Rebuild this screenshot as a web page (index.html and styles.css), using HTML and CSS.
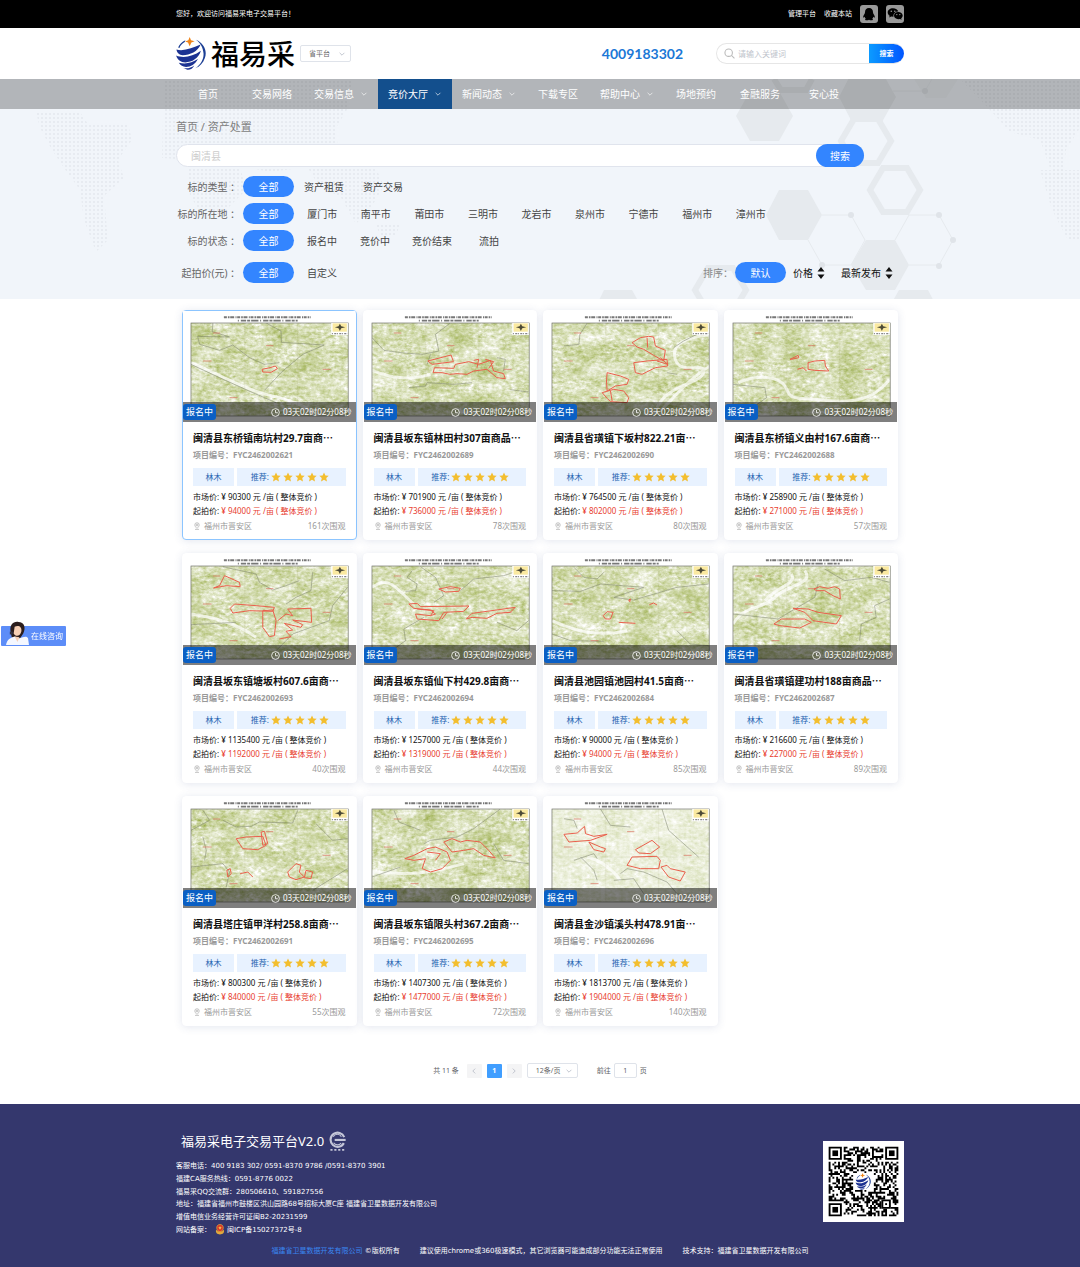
FILE: index.html
```html
<!DOCTYPE html>
<html lang="zh-CN">
<head>
<meta charset="utf-8">
<meta name="viewport" content="width=device-width, initial-scale=1">
<title>福易采电子交易平台</title>
<link rel="stylesheet" href="styles.css">
</head>
<body>
<svg class="defs" aria-hidden="true">
  <defs>
    <symbol id="logo" viewBox="0 0 93 100">
      <path d="M60 8C84 18 95 42 87 64C82 79 72 90 58 95C75 84 84 67 83 50C82 32 74 18 60 8Z" fill="#1c3f94"/>
      <path d="M1 38C22 44 50 34 74 23C66 44 42 55 20 55C10 55 2 48 1 38Z" fill="#1c3292"/>
      <path d="M0 56C20 65 50 60 75 42C68 65 48 77 28 77C14 77 3 68 0 56Z" fill="#1c3292"/>
      <path d="M8 78C28 83 48 79 66 67C58 83 44 91 30 91C20 90 13 86 8 78Z" fill="#1c3292"/>
      <path d="M22 94C36 96 45 93 55 86C51 95 42 100 34 99Z" fill="#1c3292"/>
      <path d="M6 32C10 22 18 14 28 10L26 15C18 20 12 26 10 33Z" fill="#1c3f94"/>
      <path d="M41 0L45 10L56 13L46 17L41 28L36 17L27 14L37 10Z" fill="#f08519"/>
    </symbol>
    <symbol id="chevron" viewBox="0 0 10 10"><path d="M2 3.5L5 6.5L8 3.5" fill="none" stroke="currentColor" stroke-width="1"/></symbol>
    <symbol id="star" viewBox="0 0 20 20"><path d="M10 1L12.8 7L19.4 7.7L14.5 12.2L15.9 18.8L10 15.4L4.1 18.8L5.5 12.2L.6 7.7L7.2 7Z" fill="#f3be2e"/></symbol>
    <symbol id="clock" viewBox="0 0 20 20"><g fill="none" stroke="#fff" stroke-width="1.8"><circle cx="10" cy="10" r="8.6"/><path d="M10 4.5V10.5H15"/></g></symbol>
    <symbol id="pin" viewBox="0 0 20 20"><g fill="none" stroke="#999" stroke-width="1.4"><path d="M10 16C6.500 12.500 4.500 10 4.500 7.300A5.500 5.500 0 0 1 15.500 7.300C15.500 10 13.500 12.500 10 16Z"/><circle cx="10" cy="7.500" r="2.300"/><path d="M5 18.500H15"/></g></symbol>
    <symbol id="sort" viewBox="0 0 8 14"><path d="M4 1L7.500 5.500H.5ZM4 13L7.500 8.500H.5Z" fill="#111"/></symbol>
    <pattern id="dots" width="4" height="4" patternUnits="userSpaceOnUse"><rect x="1" y="1" width="2" height="2" rx="1" fill="#e4e8ee"/></pattern>
  </defs>
</svg>

<div class="topbar">
  <div class="container topbar-row">
    <span>您好，欢迎访问福易采电子交易平台！</span>
    <div class="topbar-links">
      <a href="#">管理平台</a>
      <a href="#">收藏本站</a>
      <a class="social" href="#" aria-label="QQ">
        <svg viewBox="0 0 18 18"><rect width="18" height="18" rx="3" fill="#999"/><path d="M9 3C6.300 3 5 4.900 5 7.200C5 8 4.800 8.400 4.300 9.200C3.400 10.700 2.900 12 3.300 12.600C3.600 12.900 4.200 12.300 4.600 11.800C4.800 12.700 5.200 13.300 5.800 13.800C5.200 14 4.900 14.400 5.100 14.800C5.600 15.600 8.100 15.400 9 14.800C9.900 15.400 12.400 15.600 12.900 14.800C13.100 14.400 12.800 14 12.200 13.800C12.800 13.300 13.200 12.700 13.400 11.800C13.800 12.300 14.400 12.900 14.700 12.600C15.100 12 14.600 10.700 13.700 9.200C13.200 8.400 13 8 13 7.200C13 4.900 11.700 3 9 3Z" fill="#000"/></svg>
      </a>
      <a class="social" href="#" aria-label="微信">
        <svg viewBox="0 0 18 18"><rect width="18" height="18" rx="3" fill="#999"/><path d="M7 3.300C4 3.300 1.700 5.100 1.700 7.500C1.700 8.900 2.500 10 3.700 10.800L3.200 12.500L5.200 11.500L7.500 11.800C7 8.500 9.600 6.500 12.300 6.500C11.800 4.600 9.700 3.300 7 3.300Z" fill="#000"/><path d="M12.200 7C9.700 7 8 8.700 8 10.600C8 12.600 9.800 14.200 12.200 14.200L14 13.900L15.600 14.800L15.200 13.300C16.100 12.600 16.700 11.700 16.700 10.600C16.700 8.700 14.700 7 12.200 7Z" fill="#000"/><g fill="#999"><circle cx="5.300" cy="6.300" r=".8"/><circle cx="8.800" cy="6.300" r=".8"/><circle cx="10.800" cy="9.600" r=".7"/><circle cx="13.800" cy="9.600" r=".7"/></g></svg>
      </a>
    </div>
  </div>
</div>

<header class="container header">
  <a class="brand" href="#"><svg><use href="#logo"/></svg><span>福易采</span></a>
  <div class="select platform">
    <select aria-label="平台"><option>省平台</option></select>
    <svg><use href="#chevron"/></svg>
  </div>
  <strong class="phone">4009183302</strong>
  <form class="site-search">
    <svg viewBox="0 0 20 20"><g fill="none" stroke="#bbb" stroke-width="2"><circle cx="8.500" cy="8.500" r="6.800"/><path d="M13.500 13.500L19 19"/></g></svg>
    <input type="search" aria-label="关键词" placeholder="请输入关键词">
    <button type="button">搜索</button>
  </form>
</header>

<div class="hero">
  <svg class="hero-art" viewBox="0 79 1080 220" preserveAspectRatio="xMidYMin slice" aria-hidden="true">
    <g fill="url(#dots)">
      <path d="M36 112H80L88 124H128L132 140L118 160L124 178L104 196L108 240L96 252L84 220L80 190L64 168L52 150L40 128Z"/>
      <path d="M164 79H352L348 108L336 128L338 150L300 168L270 172L240 166L246 190L226 210L206 220L190 196L188 160L162 158Z"/>
      <path d="M308 168H376L384 186L372 206L356 224L340 196L320 188Z"/>
      <path d="M376 224H400L396 236H380Z"/>
      <path d="M960 79H1080V128L1066 150L1062 186L1050 168L1040 140L1010 132L990 110Z"/>
      <path d="M1040 170H1080V240H1068L1052 210Z"/>
    </g>
    <g fill="#e6eaee">
      <path d="M736 116L750 91H779L793 116L779 141H750Z"/>
      <path d="M839 97L852 72H882L896 97L882 122H852Z"/>
      <path d="M766 215L779 190H808L822 215L808 240H779Z"/>
      <path d="M851 265L866 240H895L909 265L895 290H866Z"/>
      <path d="M592 315L604 290H632L646 315Z"/>
      <path d="M885 315L899 290H928L941 315Z"/>
      <path d="M914 79H958L946 98H926Z" opacity=".4"/>
    </g>
    <g fill="none" stroke="#e6eaee" stroke-width="6">
      <path d="M841 141L854 119H878L891 141L878 163H854Z"/>
      <path d="M870 190L883 168H907L920 190L907 212H883Z"/>
      <path d="M695 290L708 268H733L746 290L733 312H708Z"/>
      <path d="M774 79L781 90H806L812 79"/>
    </g>
    <g fill="none" stroke="#e6eaee">
      <path d="M822 215H851L865 240L851 265H822L808 240"/>
      <path d="M895 240L909 215H939L953 240L939 265H909"/>
      <path d="M893 91H925L932 79"/>
    </g>
    <g fill="#e0e4e9"><circle cx="851" cy="215" r="3"/><circle cx="822" cy="265" r="3"/><circle cx="939" cy="215" r="3"/><circle cx="953" cy="240" r="3"/><circle cx="939" cy="266" r="3"/><circle cx="925" cy="91" r="3"/></g>
  </svg>
  <nav class="nav">
    <div class="container nav-row">
      <a href="#">首页</a>
      <a href="#">交易网络</a>
      <a class="has-menu" href="#">交易信息<svg><use href="#chevron"/></svg></a>
      <a class="has-menu active" href="#">竞价大厅<svg><use href="#chevron"/></svg></a>
      <a class="has-menu" href="#">新闻动态<svg><use href="#chevron"/></svg></a>
      <a href="#">下载专区</a>
      <a class="has-menu" href="#">帮助中心<svg><use href="#chevron"/></svg></a>
      <a href="#">场地预约</a>
      <a href="#">金融服务</a>
      <a href="#">安心投</a>
    </div>
  </nav>
  <div class="container hero-body">
    <p class="crumbs"><a href="#">首页</a> / <a href="#">资产处置</a></p>
    <form class="asset-search">
      <input type="text" aria-label="标的名称" placeholder="闽清县">
      <button type="button">搜索</button>
    </form>
    <div class="filters">
      <div class="filter">
        <span class="filter-label">标的类型 ：</span>
        <div class="options snug"><button class="on">全部</button><button>资产租赁</button><button>资产交易</button></div>
      </div>
      <div class="filter">
        <span class="filter-label">标的所在地 ：</span>
        <div class="options even"><button class="on">全部</button><button>厦门市</button><button>南平市</button><button>莆田市</button><button>三明市</button><button>龙岩市</button><button>泉州市</button><button>宁德市</button><button>福州市</button><button>漳州市</button></div>
      </div>
      <div class="filter">
        <span class="filter-label">标的状态 ：</span>
        <div class="options"><button class="on">全部</button><button>报名中</button><button>竞价中</button><button>竞价结束</button><button>流拍</button></div>
      </div>
      <div class="filter filter-last">
        <span class="filter-label">起拍价(元) ：</span>
        <div class="options"><button class="on">全部</button><button>自定义</button></div>
        <div class="sort">
          <span>排序：</span>
          <button class="on">默认</button>
          <button class="sort-key">价格<svg><use href="#sort"/></svg></button>
          <button class="sort-key">最新发布<svg><use href="#sort"/></svg></button>
        </div>
      </div>
    </div>
  </div>
</div>

<main class="container">
  <div class="cards" id="cards"></div>
  <div class="pager">
    <span class="pager-total">共 11 条</span>
    <button class="page" disabled aria-label="上一页"><svg viewBox="0 0 10 10"><path d="M6.500 2L3.500 5L6.500 8"/></svg></button>
    <button class="page current">1</button>
    <button class="page" disabled aria-label="下一页"><svg viewBox="0 0 10 10"><path d="M3.500 2L6.500 5L3.500 8"/></svg></button>
    <div class="select page-size">
      <select aria-label="每页条数"><option>12条/页</option></select>
      <svg><use href="#chevron"/></svg>
    </div>
    <label class="jump">前往 <input type="text" value="1"> 页</label>
  </div>
</main>

<footer class="footer">
  <div class="container">
    <div class="footer-main">
      <div>
        <h2 class="footer-title">福易采电子交易平台V2.0
          <svg viewBox="0 0 48 56"><g fill="none" stroke="#c4c6d8"><path d="M43 17A20 20 0 1 0 42 34" stroke-width="6"/><path d="M16 25H47" stroke-width="6"/><path d="M12 16A13 13 0 0 1 35 16M13 33A13 13 0 0 0 34 34" stroke-width="3"/><path d="M4 53H44" stroke-width="5" stroke-dasharray="6 5"/></g></svg>
        </h2>
        <ul class="contact">
          <li>客服电话：400 9183 302/ 0591-8370 9786 /0591-8370 3901</li>
          <li>福建CA服务热线：0591-8776 0022</li>
          <li>福易采QQ交流群：280506610、591827556</li>
          <li>地址：福建省福州市鼓楼区洪山园路68号招标大厦C座 福建省卫星数据开发有限公司</li>
          <li>增值电信业务经营许可证闽B2-20231599</li>
          <li class="record">网站备案：
            <svg viewBox="0 0 28 30"><path d="M3 16C1 24 6 29 14 29S27 24 25 16L20 20H8Z" fill="#e2a93b"/><path d="M14 1C20 1 24 5 23 12C22 18 18 21 14 21S6 18 5 12C4 5 8 1 14 1Z" fill="#d8352a" stroke="#e2a93b" stroke-width="2"/><path d="M14 5L15.500 9H19L16 11.500L17 15L14 13L11 15L12 11.500L9 9H12.500Z" fill="#f7c948"/></svg>
            闽ICP备15027372号-8</li>
        </ul>
      </div>
      <svg class="qr" id="qr" viewBox="-3 -3 43 43" role="img" aria-label="二维码"></svg>
    </div>
    <div class="legal">
      <span><a href="#">福建省卫星数据开发有限公司</a> ©版权所有</span>
      <span>建议使用chrome或360极速模式，其它浏览器可能造成部分功能无法正常使用</span>
      <span>技术支持：福建省卫星数据开发有限公司</span>
    </div>
  </div>
</footer>

<a class="chat" href="#">
  <svg viewBox="0 0 24 26"><path d="M5 12C3 4 8 0 13 1C19 1 21 7 18 13L14 19L6 17Z" fill="#2b1d1c"/><path d="M9 6C13 4 17 6 16 11C15 16 10 17 8 13Z" fill="#f6cfb4"/><path d="M0 25C1 19 5 17 9 16L14 18C18 17 21 15 23 18L24 25Z" fill="#f4f7ff"/><path d="M9 16L12 22L14 17Z" fill="#f6cfb4"/><path d="M4 11H7V14H4Z" fill="#334"/></svg>
  在线咨询
</a>
<script src="script.js"></script>
</body>
</html>
```
FILE: styles.css
```css
* { box-sizing: border-box; }
body {
  margin: 0;
  background: #fff;
  color: #222;
  font: 8px/14px "Noto Sans", "Noto Sans CJK SC", sans-serif;
}
a { color: inherit; text-decoration: none; }
button, input, select { font: inherit; color: inherit; margin: 0; padding: 0; border: 0; background: none; outline: 0; }
button { cursor: pointer; white-space: nowrap; }
ul, h2, h3, p { margin: 0; padding: 0; list-style: none; }
svg { display: block; flex: none; }
.defs { position: absolute; width: 0; height: 0; }
.container { width: 100%; max-width: 728px; margin: 0 auto; }

.topbar { background: #000; color: #fff; font-size: 7px; }
.topbar-row { display: flex; align-items: center; justify-content: space-between; height: 28px; }
.topbar-links { display: flex; align-items: center; gap: 8px; }
.social svg { width: 18px; height: 18px; }

.header { display: flex; align-items: center; height: 51px; }
.brand { display: flex; align-items: center; gap: 4px; color: #000; font-size: 28px; font-weight: 500; line-height: 40px; }
.brand svg { width: 31px; height: 33px; }
.select { position: relative; border: 1px solid #dfe3ea; border-radius: 2px; color: #666; font-size: 7px; }
.select select { width: 100%; height: 100%; padding-left: 8px; appearance: none; }
.select svg { position: absolute; top: 50%; right: 4px; width: 8px; height: 8px; margin-top: -4px; color: #b4b9c4; pointer-events: none; }
.platform { width: 51px; height: 17px; margin-left: 5px; }
.phone { margin-left: auto; margin-right: 33px; color: #1b78d6; font: bold 14px/20px Lato, sans-serif; }
.site-search { display: flex; align-items: center; width: 188px; height: 21px; padding-left: 7px; border: 1px solid #e6e6e6; border-right: 0; border-radius: 11px; overflow: hidden; }
.site-search svg { width: 11px; height: 11px; }
.site-search input { flex: 1; min-width: 0; padding-left: 3px; }
.site-search button { width: 35px; height: 21px; background: linear-gradient(90deg, #0c9bff, #0055ff); color: #fff; font-size: 7px; font-weight: bold; }
::placeholder { color: #c0c4cc; opacity: 1; }

.hero { position: relative; background: #f1f5fa; }
.hero-art { position: absolute; inset: 0; width: 100%; height: 100%; }
.nav { position: relative; background: rgba(0, 0, 0, .26); color: #fff; font-size: 10px; }
.nav-row { display: flex; }
.nav a { display: flex; align-items: center; justify-content: center; width: 64px; height: 30px; white-space: nowrap; }
.nav a.has-menu { width: 74px; gap: 6px; }
.nav a svg { width: 8px; height: 8px; opacity: .8; }
.nav a.active { background: #134f8d; }
.hero-body { position: relative; padding: 9px 0 16px; }
.crumbs { color: #808080; font-size: 11px; line-height: 18px; }
.asset-search { display: flex; max-width: 688px; height: 23px; margin-top: 8px; border-radius: 12px; background: #fff; border: 1px solid #e0e4ed; font-size: 10px; }
.asset-search input { flex: 1; padding-left: 14px; }
.asset-search ::placeholder { color: #ccc; }
.asset-search button { width: 48px; height: 23px; margin: -1px; border-radius: 12px; background: #3385ff; color: #fff; }
.filters { display: flex; flex-direction: column; gap: 6px; margin-top: 9px; font-size: 10px; }
.filter { display: flex; align-items: center; height: 21px; color: #444; }
.filter-last { margin-top: 5px; }
.filter-label { width: 67px; padding-right: 3px; text-align: right; color: #666; white-space: nowrap; }
.options { display: flex; gap: 3px; }
.options.snug { gap: 1px; }
.options.even { display: grid; grid-template-columns: repeat(10, 1fr); width: 533px; }
.options button { min-width: 50px; height: 21px; padding: 0 9px; }
.filter .on { width: 51px; height: 21px; padding: 0; border-radius: 11px; background: #3385ff; color: #fff; }
.sort { display: flex; align-items: center; margin-left: auto; padding-right: 11px; color: #888; }
.sort span { margin-right: 2px; }
.sort-key { display: flex; align-items: center; gap: 4px; color: #111; margin-left: 7px; }
.sort-key + .sort-key { margin-left: 16px; }
.sort-key svg { width: 8px; height: 14px; }

.cards { display: grid; grid-template-columns: repeat(4, 1fr); gap: 13px 6px; padding: 11px 6px 0; }
.card { border: 1px solid #fff; border-radius: 4px; background: #fff; box-shadow: 0 1px 8px rgba(60, 80, 140, .14); }
.card.picked { border-color: #8cc5ff; }
.thumb { position: relative; height: 111px; }
.thumb .map { width: 100%; height: 100%; }
.status { position: absolute; inset: auto 0 0; display: flex; align-items: center; justify-content: space-between; height: 20px; padding-right: 4px; background: rgba(0, 0, 0, .5); color: #fff; }
.badge { height: 16px; padding: 0 3px; border-radius: 3px; background: #0a5fc4; font-size: 9px; line-height: 16px; }
.timer { display: flex; align-items: center; gap: 3px; white-space: nowrap; }
.timer svg { width: 9px; height: 9px; }
.card-body { padding: 8px 10px 6px; }
.card h3 { color: #111; font-size: 10px; line-height: 16px; white-space: nowrap; }
.code { margin-top: 3px; color: #999; font-weight: bold; line-height: 12px; }
.tags { display: flex; gap: 3px; margin: 7px 0 4px; color: #2463b0; }
.tags > span { display: flex; align-items: center; justify-content: center; height: 18px; background: #e8f2ff; }
.kind { width: 41px; }
.rating { flex: 1; gap: 2px; padding-right: 3px; }
.rating svg { width: 10px; height: 10px; }
.price { white-space: nowrap; color: #111; }
.price em { font-style: normal; color: #e8402f; }
.place { display: flex; align-items: center; gap: 3px; margin-top: 1px; color: #999; }
.place svg { width: 8px; height: 8px; }
.place span { margin-left: auto; }

.pager { display: flex; align-items: center; justify-content: center; gap: 5px; height: 15px; margin: 37px 0 26px; color: #606266; font-size: 7px; }
.pager-total { margin-right: 3px; }
.page { display: flex; align-items: center; justify-content: center; width: 15px; height: 14px; border-radius: 1px; background: #f4f4f5; color: #b4b9c4; }
.page svg { width: 8px; height: 8px; fill: none; stroke: currentColor; }
.page.current { background: #409eff; color: #fff; font-weight: bold; }
.page-size { width: 51px; height: 15px; }
.jump { display: flex; align-items: center; gap: 3px; margin-left: 14px; }
.jump input { width: 23px; height: 15px; border: 1px solid #dfe3ea; border-radius: 2px; text-align: center; }

.footer { padding: 26px 0 9px; background: #34376d; color: #fff; font-size: 7px; }
.footer-main { display: flex; justify-content: space-between; }
.footer-title { display: flex; align-items: center; gap: 5px; padding-left: 5px; font-size: 13px; font-weight: normal; line-height: 22px; }
.footer-title svg { width: 17px; height: 20px; }
.contact, .legal { font-family: "DejaVu Sans", "Noto Sans CJK SC", sans-serif; }
.contact { display: grid; align-content: space-between; height: 76px; margin-top: 8px; line-height: 12px; }
.record { display: flex; align-items: center; gap: 2px; }
.record svg { width: 10px; height: 11px; margin-left: 2px; }
.qr { width: 81px; height: 81px; margin-top: 11px; }
.legal { display: flex; justify-content: center; gap: 20px; margin-top: 8px; line-height: 14px; white-space: nowrap; }
.legal a { color: #3a86f0; }

.chat { position: fixed; left: 1px; top: 626px; display: flex; align-items: flex-end; gap: 2px; height: 20px; padding: 0 3px 0 5px; border-radius: 1px; background: #5c8df8; color: #fff; line-height: 20px; }
.chat svg { width: 23px; height: 25px; }
```
FILE: script.js
```js
// Plot maps use a drawing space three times the thumbnail's pixel size.
const lots = [
  {
    title: "闽清县东桥镇南坑村29.7亩商⋯", code: "2621", market: 90300, start: 94000, views: 161, picked: true,
    roads: "M24 155C110 190 170 230 250 250S390 285 400 333",
    bounds: "M90 36L88 62L140 78L44 76L50 100L110 118L150 102L200 140L245 160L290 155M250 36L295 60L296 94L425 102L360 130L300 180L245 238M24 160L110 200L210 245L280 275",
    plots: "M238 175L262 170L278 165L284 173L265 184L240 183Z"
  },
  {
    title: "闽清县坂东镇林田村307亩商品⋯", code: "2689", market: 701900, start: 736000, views: 78,
    roads: "M24 178C80 200 130 210 200 190",
    bounds: "M24 80L60 118L120 126L175 130L225 120L215 70L260 36M190 160L200 130M135 230L185 225L190 215L270 220L325 215M400 140L425 145L420 180M440 236L495 243",
    plots: "M192 150L262 132L269 152L205 160ZM208 185L212 170L270 172L275 160L315 152L345 160L380 148L390 180L420 188L425 203L400 200L370 175L330 180L310 190L280 188L258 190L235 185ZM330 148L345 145L340 170M365 145L390 152L375 172"
  },
  {
    title: "闽清县省璜镇下坂村822.21亩⋯", code: "2690", market: 764500, start: 802000, views: 80,
    roads: "M500 70C430 80 380 95 395 145S490 150 480 185S370 220 340 290M500 165C440 200 410 240 350 300",
    bounds: "M130 36L108 70L105 100L60 105M500 50L420 90L390 110M370 185L400 190",
    plots: "M265 95L290 80L315 76L330 78L335 105L365 118L360 150L330 133L300 115L280 108ZM270 155L310 150L370 145L372 165L335 170L295 190L275 185ZM190 185L230 195L255 205L250 220L215 225L190 240L188 210ZM175 245L210 235L240 240L255 260L250 275L200 272L190 262ZM200 240L205 270M310 80L312 110M350 140L372 160L340 150"
  },
  {
    title: "闽清县东桥镇义由村167.6亩商⋯", code: "2688", market: 258900, start: 271000, views: 57,
    roads: "M40 215C100 190 160 195 180 225S180 260 260 265S430 290 495 205",
    bounds: "M24 220L120 230L125 260L90 285M470 40L495 60",
    plots: "M196 145L220 133L222 140L200 145ZM250 155L270 150L300 148L302 165L312 180L270 178L250 175ZM218 175L235 170L245 180"
  },
  {
    title: "闽清县坂东镇塘坂村607.6亩商⋯", code: "2693", market: 1135400, start: 1192000, views: 40,
    roads: "M24 180C80 190 150 200 220 250",
    bounds: "M120 38L220 60L230 85L270 108L310 95L350 80M390 55L385 110L340 130L310 150M495 100L450 155L440 200L330 240L280 290M24 212L160 205",
    plots: "M92 102L110 95L125 65L170 85L172 98L130 95ZM142 163L155 150L220 155L275 160L270 172L200 170L150 177ZM240 170L270 168L280 200L275 245L260 248L240 220ZM285 200L310 180L330 185L315 165L385 163L387 205L330 198L360 212L355 220L305 208L330 228L310 232L325 248L290 255"
  },
  {
    title: "闽清县坂东镇仙下村429.8亩商⋯", code: "2694", market: 1257000, start: 1319000, views: 44,
    roads: "M24 100C80 60 100 110 150 150",
    bounds: "M145 50L130 70L160 90L155 110L125 112M170 38L215 70L240 125L210 145M290 110L330 75L420 65L495 40M180 190L120 225L125 260L90 285M495 200L460 230L400 205",
    plots: "M225 105L260 98L290 103L285 112L245 114ZM135 150L160 148L170 158L316 156L300 172L240 175L225 200L160 195L155 180L200 185L215 180L200 168L150 163ZM308 195L325 178L370 172L455 160L440 175L400 178L370 193L325 190ZM160 165L210 170L200 185M250 175L235 195"
  },
  {
    title: "闽清县池园镇池园村41.5亩商⋯", code: "2684", market: 90000, start: 94000, views: 85,
    roads: "M24 200C90 230 160 250 250 230",
    bounds: "M90 40L120 70L160 75L180 55M24 110L110 112L170 90L300 100L210 130L270 138L400 100L495 90M24 240L80 260L180 262M400 230L440 270L495 275",
    plots: "M178 185L190 173L208 175L200 195L185 195ZM225 205L275 208M255 138L260 135L258 143ZM317 152L330 147L340 153"
  },
  {
    title: "闽清县省璜镇建功村188亩商品⋯", code: "2687", market: 216600, start: 227000, views: 89,
    roads: "M240 50C270 90 190 90 150 130S60 150 24 210M200 60C220 90 150 100 120 140",
    bounds: "M300 45L360 80L440 70L495 85M280 90L270 130L210 165L160 195L24 180M495 135L450 155L455 190L410 210L405 260",
    plots: "M268 105L285 98L310 103L330 98L345 105L347 135L325 125L300 110L275 110ZM147 210L170 195L240 195L260 205L225 222L165 215ZM205 163L250 165L280 175L350 185L335 210L265 200L240 175Z"
  },
  {
    title: "闽清县塔庄镇甲洋村258.8亩商⋯", code: "2691", market: 800300, start: 840000, views: 55,
    roads: "",
    bounds: "M60 40L80 70L24 100M120 70L160 90L205 88L230 75L330 78L345 40M400 80L450 130L495 125M60 120L70 160L65 190M24 210L120 200L140 225L130 270M390 280L495 215",
    plots: "M160 125L190 120L240 118L250 145L225 158L180 155ZM235 105L245 103L255 140L240 145ZM315 225L340 200L355 205L350 225L365 240L340 248L320 240ZM370 220L390 225L385 245L365 242ZM132 220L142 215L145 230L135 240ZM172 230L195 225L210 240"
  },
  {
    title: "闽清县坂东镇限头村367.2亩商⋯", code: "2695", market: 1407300, start: 1477000, views: 72,
    roads: "M24 225C120 230 160 240 300 200",
    bounds: "M410 36L330 95L280 120L200 130L180 140M90 40L105 75L170 100M390 140L420 190L495 200M24 240L110 210",
    plots: "M123 185L150 175L190 155L215 150L250 165L260 190L235 215L200 225L175 215L185 185L150 190ZM240 135L265 125L290 135L310 130L350 135L375 160L395 183L360 175L330 155L300 160L265 165ZM190 165L230 170L215 190"
  },
  {
    title: "闽清县金沙镇溪头村478.91亩⋯", code: "2696", market: 1813700, start: 1904000, views: 140, pale: true,
    roads: "M130 180C170 190 200 210 230 250",
    bounds: "M60 65L90 70L100 95M170 36L200 85L260 90M355 36L375 100L465 180M90 190L150 170L160 185M110 180L150 220L160 250M230 230L250 215L300 225L370 255L400 290L480 310M210 250L270 245L300 290",
    plots: "M60 112L100 108L122 88L125 110L150 118L190 112L140 130L75 135ZM135 135L170 150L185 155L180 165L150 158ZM275 158L325 130L348 150L320 170L285 168ZM250 205L265 180L340 178L350 190L345 215L290 215ZM352 210L370 205L380 215L425 225L410 252L375 240Z"
  }
];

const map = (lot, seed) => `
<svg class="map" viewBox="0 0 519 333" preserveAspectRatio="none" aria-hidden="true">
  <filter id="relief-${seed}" x="0" y="0" width="1" height="1" color-interpolation-filters="sRGB">
    <feTurbulence type="fractalNoise" baseFrequency=".012 .02" numOctaves="2" seed="${seed}" result="broad"/>
    <feTurbulence type="fractalNoise" baseFrequency=".07 .11" numOctaves="3" seed="${seed + 20}" result="fine"/>
    <feComposite in="broad" in2="fine" operator="arithmetic" k2=".45" k3=".55"/>
    <feColorMatrix values="-.62 0 0 0 1.15  -.5 0 0 0 1.12  -1.1 0 0 0 1.26  0 0 0 0 1"/>
  </filter>
  <clipPath id="frame-${seed}"><rect x="24" y="36" width="473" height="279"/></clipPath>
  <rect width="519" height="333" fill="#fff"/>
  <path d="M123 19H384" stroke="#777" stroke-width="6" stroke-dasharray="9 3 5 2 12 4 3 2"/>
  <path d="M165 29H345" stroke="#777" stroke-width="5" stroke-dasharray="3 6 16 3 9 3 22 5"/>
  <g clip-path="url(#frame-${seed})" fill="none">
    <rect x="24" y="36" width="473" height="279" fill="#000" filter="url(#relief-${seed})"/>
    ${lot.pale ? '<rect x="24" y="36" width="473" height="279" fill="#fff" opacity=".5"/>' : ""}
    <path d="${lot.roads}" stroke="#fff" stroke-width="9" opacity=".7"/>
    <path d="${lot.bounds}" stroke="#7f8570" stroke-width="2" opacity=".8"/>
    <path d="M186 36V315M345 36V315M24 180H497" stroke="#8f9a5c" opacity=".4"/>
    <path d="M60 150h26M250 104h22M420 175h24M140 260h24M90 66h22" stroke="#d8705c" stroke-width="3" opacity=".7"/>
    <path d="${lot.plots}" stroke="#ea5f4c" stroke-width="3"/>
  </g>
  <rect x="24" y="36" width="473" height="279" fill="none" stroke="#6d6f68" stroke-width="2"/>
  <rect x="446" y="36" width="50" height="36" fill="#fff"/>
  <rect x="450" y="37" width="43" height="25" fill="#fae9a0"/>
  <path d="M457 49L468 46L472 38L476 46L488 49L476 52L472 60L468 52Z" fill="#4c4a36"/>
  <path d="M448 68H494" stroke="#888" stroke-width="4" stroke-dasharray="3 4 6 2"/>
</svg>`;

document.getElementById("cards").innerHTML = lots.map((lot, i) => `
<article class="card${lot.picked ? " picked" : ""}">
  <div class="thumb">${map(lot, i + 3)}
    <div class="status"><span class="badge">报名中</span><span class="timer"><svg><use href="#clock"/></svg>03天02时02分08秒</span></div>
  </div>
  <div class="card-body">
    <h3><a href="#">${lot.title}</a></h3>
    <p class="code">项目编号：FYC246200${lot.code}</p>
    <div class="tags"><span class="kind">林木</span><span class="rating">推荐:${'<svg><use href="#star"/></svg>'.repeat(5)}</span></div>
    <p class="price">市场价: ¥ ${lot.market} 元 /亩 ( 整体竞价 )</p>
    <p class="price">起拍价: <em>¥ ${lot.start} 元 /亩 ( 整体竞价 )</em></p>
    <p class="place"><svg><use href="#pin"/></svg>福州市晋安区<span>${lot.views}次围观</span></p>
  </div>
</article>`).join("");

// QR symbol: 37 x 37 modules with three finders, one alignment mark and the logo.
const size = 37;
const ring = (x, y, n) => `<path d="M${x} ${y}h${n}v${n}h-${n}zM${x + 1} ${y + 1}v${n - 2}h${n - 2}v-${n - 2}z"/>`;
let seed = 20231599;
let modules = "";
for (let y = 0; y < size; y++) {
  for (let x = 0; x < size; x++) {
    seed = (seed * 1103515245 + 12345) % 2147483648;
    const finder = (x < 8 && y < 8) || (x > 28 && y < 8) || (x < 8 && y > 28);
    const align = x > 27 && x < 33 && y > 27 && y < 33;
    const centre = x > 12 && x < 24 && y > 13 && y < 23;
    if (!finder && !align && !centre && seed / 2147483648 < 0.5) modules += `M${x} ${y}h1v1h-1z`;
  }
}
document.getElementById("qr").innerHTML =
  `<rect x="-3" y="-3" width="43" height="43" fill="#fff"/><path d="${modules}"/>` +
  [[0, 0], [30, 0], [0, 30]].map(([x, y]) => ring(x, y, 7) + `<rect x="${x + 2}" y="${y + 2}" width="3" height="3"/>`).join("") +
  ring(28, 28, 5) + '<rect x="30" y="30" width="1" height="1"/><use href="#logo" x="14" y="14" width="9" height="9"/>';
```
